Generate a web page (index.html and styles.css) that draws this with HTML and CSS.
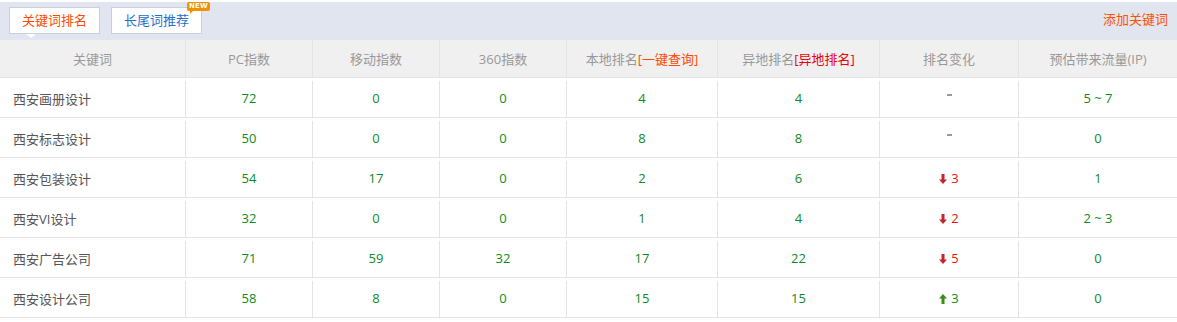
FILE: index.html
```html
<!DOCTYPE html>
<html lang="zh-CN">
<head>
<meta charset="utf-8">
<title>关键词排名</title>
<link rel="stylesheet" href="styles.css">
</head>
<body>
<div class="panel">
  <div class="topbar">
    <div class="tabs">
      <div class="tab tab-active">关键词排名<span class="pointer"></span></div>
      <div class="tab tab-blue">长尾词推荐<span class="badge">NEW</span></div>
    </div>
    <a class="add-link">添加关键词</a>
  </div>
  <div class="grid head">
    <div class="cell">关键词</div>
    <div class="cell">PC指数</div>
    <div class="cell">移动指数</div>
    <div class="cell">360指数</div>
    <div class="cell">本地排名<span class="orange">[一键查询]</span></div>
    <div class="cell">异地排名<span class="red">[异地排名]</span></div>
    <div class="cell">排名变化</div>
    <div class="cell">预估带来流量(IP)</div>
  </div>
  <div class="grid row">
    <div class="cell kw">西安画册设计</div>
    <div class="cell">72</div><div class="cell">0</div><div class="cell">0</div><div class="cell">4</div><div class="cell">4</div>
    <div class="cell"><span class="dash"></span></div>
    <div class="cell">5 ~ 7</div>
  </div>
  <div class="grid row">
    <div class="cell kw">西安标志设计</div>
    <div class="cell">50</div><div class="cell">0</div><div class="cell">0</div><div class="cell">8</div><div class="cell">8</div>
    <div class="cell"><span class="dash"></span></div>
    <div class="cell">0</div>
  </div>
  <div class="grid row">
    <div class="cell kw">西安包装设计</div>
    <div class="cell">54</div><div class="cell">17</div><div class="cell">0</div><div class="cell">2</div><div class="cell">6</div>
    <div class="cell down"><svg class="arrow" width="8" height="10" viewBox="0 0 8 10"><path d="M2.5 0h3v5.5H8L4 10 0 5.5h2.5z" fill="#c0262c"/></svg>3</div>
    <div class="cell">1</div>
  </div>
  <div class="grid row">
    <div class="cell kw">西安VI设计</div>
    <div class="cell">32</div><div class="cell">0</div><div class="cell">0</div><div class="cell">1</div><div class="cell">4</div>
    <div class="cell down"><svg class="arrow" width="8" height="10" viewBox="0 0 8 10"><path d="M2.5 0h3v5.5H8L4 10 0 5.5h2.5z" fill="#c0262c"/></svg>2</div>
    <div class="cell">2 ~ 3</div>
  </div>
  <div class="grid row">
    <div class="cell kw">西安广告公司</div>
    <div class="cell">71</div><div class="cell">59</div><div class="cell">32</div><div class="cell">17</div><div class="cell">22</div>
    <div class="cell down"><svg class="arrow" width="8" height="10" viewBox="0 0 8 10"><path d="M2.5 0h3v5.5H8L4 10 0 5.5h2.5z" fill="#c0262c"/></svg>5</div>
    <div class="cell">0</div>
  </div>
  <div class="grid row">
    <div class="cell kw">西安设计公司</div>
    <div class="cell">58</div><div class="cell">8</div><div class="cell">0</div><div class="cell">15</div><div class="cell">15</div>
    <div class="cell up"><svg class="arrow" width="8" height="10" viewBox="0 0 8 10"><path d="M2.5 10h3V4.5H8L4 0 0 4.5h2.5z" fill="#3b8c1a"/></svg>3</div>
    <div class="cell">0</div>
  </div>
</div>
</body>
</html>
```
FILE: styles.css
```css
* { box-sizing: border-box; }
html, body { margin: 0; padding: 0; background: #fff; }
body {
  font-family: "Open Sans", "Noto Sans CJK SC", sans-serif;
  font-size: 13px;
  padding-top: 2px;
}
.panel { width: 1177px; }
.topbar {
  height: 38px;
  background: #e1e5ef;
  display: flex;
  align-items: flex-start;
  justify-content: space-between;
  padding: 5px 9px 0 9px;
}
.tabs { display: flex; gap: 11px; }
.tab {
  position: relative;
  width: 91px;
  height: 27px;
  background: #fff;
  border: 1px solid #c9cfdd;
  display: flex;
  align-items: center;
  justify-content: center;
  font-size: 13px;
  line-height: 1;
  padding-bottom: 1px;
}
.tab-active { color: #ff4a00; }
.tab-blue { color: #1f6fcf; }
.pointer {
  position: absolute;
  left: 16px;
  bottom: -5px;
  width: 0; height: 0;
  border-left: 5px solid transparent;
  border-right: 5px solid transparent;
  border-top: 4px solid #fff;
}
.badge {
  position: absolute;
  right: -9px;
  top: -6px;
  background: #f29100;
  color: #fff;
  font-family: "DejaVu Sans", sans-serif;
  font-weight: bold;
  font-size: 7px;
  line-height: 9px;
  padding: 0 2px;
  border-radius: 2px;
  letter-spacing: 0.2px;
}
.badge::after {
  content: "";
  position: absolute;
  left: 3px;
  bottom: -3px;
  border-left: 3px solid #f29100;
  border-bottom: 3px solid transparent;
}
.add-link {
  color: #ff5000;
  font-size: 13px;
  line-height: 18px;
  margin-top: 3px;
  cursor: pointer;
}
.grid {
  display: grid;
  grid-template-columns: 185px 127px 127px 127px 151px 162px 139px 159px;
}
.head {
  height: 38px;
  background: #f0f0f0;
  border-bottom: 1px solid #e3e3e3;
  color: #999;
}
.head .cell {
  height: 37px;
  padding-bottom: 1px;
}
.cell {
  display: flex;
  align-items: center;
  justify-content: center;
  border-left: 1px solid #e4e4e4;
  white-space: nowrap;
}
.cell:first-child { border-left: none; }
.orange { color: #ff4a00; }
.red { color: #e8000b; }
.row {
  height: 40px;
  padding-top: 3px;
  border-bottom: 1px solid #e4e4e4;
  color: #0e8a22;
}
.row .cell { height: 36px; padding-bottom: 2px; }
.row .kw {
  justify-content: flex-start;
  padding-left: 13px;
  color: #555;
}
.dash {
  display: block;
  width: 5px;
  height: 2px;
  background: #999;
  margin-top: -7px;
}
.down { color: #ee1111; }
.up { color: #0e8a22; }
.arrow { margin-right: 4px; margin-top: 1px; }
```
